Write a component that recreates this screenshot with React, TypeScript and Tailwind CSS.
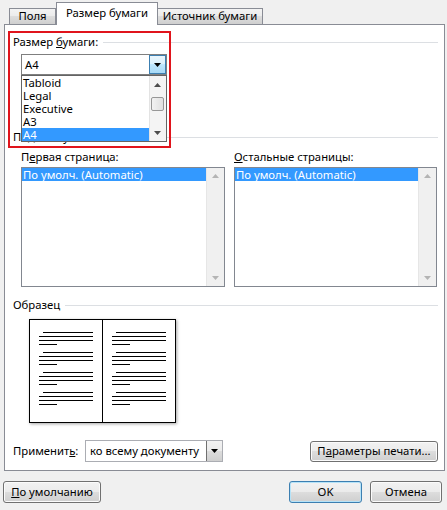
import React from "react"

const btn =
  "flex items-center justify-center rounded-[3px] border border-[#707070] bg-[linear-gradient(#f2f2f2,#ebebeb_49%,#dddddd_50%,#cfcfcf)] shadow-[inset_0_0_0_1px_#fbfbfb] text-black"

function Tri({ up = false, color = "#000" }: { up?: boolean; color?: string }) {
  return (
    <svg width="7" height="4" viewBox="0 0 7 4" className="block">
      <path d={up ? "M0 4 L3.5 0 L7 4 Z" : "M0 0 L7 0 L3.5 4 Z"} fill={color} />
    </svg>
  )
}

function Header({ children }: { children: React.ReactNode }) {
  return (
    <div className="flex h-[14px] items-center">
      <span className="pr-[5px] leading-[14px]">{children}</span>
      <div className="mr-[1px] h-px flex-1 bg-[#dcdfe3]" />
    </div>
  )
}

function ListBox() {
  return (
    <div className="flex h-[120px] border border-[#828790] bg-white">
      <div className="flex-1">
        <div className="h-[13px] bg-[#3399ff] pl-[1px] leading-[13px] text-white">
          По умолч. (Automatic)
        </div>
      </div>
      <div className="flex w-[18px] flex-col items-center justify-between bg-[#f0f0f0] py-[6px] shadow-[inset_1px_0_0_#e6e6e6]">
        <Tri up color="#b4b4b4" />
        <Tri color="#b4b4b4" />
      </div>
    </div>
  )
}

function Page({ first }: { first?: boolean }) {
  const groups = [0, 1, 2, 3]
  return (
    <div
      className={
        "flex h-full flex-1 flex-col gap-[7px] pt-[12px] pl-[9px] " +
        (first ? "border-r border-black" : "")
      }
    >
      {groups.map((g) => (
        <div key={g} className="flex flex-col gap-[3px]">
          <div className="ml-[4px] h-px w-[50px] bg-black" />
          <div className="h-px w-[54px] bg-black" />
          <div className="h-px w-[54px] bg-black" />
          <div className="h-px w-[18px] bg-black" />
        </div>
      ))}
    </div>
  )
}

export default function App() {
  const sizes = ["Tabloid", "Legal", "Executive", "A3", "A4"]
  return (
    <div className="h-[510px] w-[447px] overflow-hidden bg-[#f0f0f0] font-['Noto_Sans','Open_Sans',sans-serif] text-[11.3px] text-black">
      {/* tabs */}
      <div className="flex h-[24px] items-end pl-[9px]">
        <div className="flex h-[16px] w-[47px] items-center justify-center border-x border-t border-[#898c95] bg-[linear-gradient(#f3f3f3,#ebebeb_50%,#dddddd_50%,#cfcfcf)]">
          Поля
        </div>
        <div className="relative z-10 -mb-px flex h-[23px] w-[102px] items-center justify-center border-x border-t border-[#898c95] bg-white pb-[2px]">
          Размер бумаги
        </div>
        <div className="flex h-[16px] w-[105px] items-center justify-center border-r border-t border-[#898c95] bg-[linear-gradient(#f3f3f3,#ebebeb_50%,#dddddd_50%,#cfcfcf)]">
          Источник бумаги
        </div>
      </div>

      {/* panel */}
      <div className="relative ml-[4px] flex h-[447px] w-[441px] flex-col border border-[#898c95] bg-white pt-[10px] pr-[5px] pl-[8px]">
        <Header>
          Размер <span className="underline">б</span>умаги:
        </Header>
        <div className="mt-[5px] ml-[8px] flex h-[21px] w-[146px] items-center border border-[#7f7f7f] bg-white">
          <span className="flex-1 pl-[3px] leading-[19px]">A4</span>
          <div className="flex h-[19px] w-[17px] items-center justify-center border border-[#3c7fb1] bg-[linear-gradient(#eaf6fd,#d9f0fc_49%,#bee6fd_50%,#a7d9f5)]">
            <Tri />
          </div>
        </div>

        <div className="mt-[55px]">
          <Header>Подача бумаги</Header>
        </div>

        <div className="mt-[6px] ml-[8px] flex gap-[9px]">
          <div className="w-[204px]">
            <div className="h-[14px] leading-[14px]">
              П<span className="underline">е</span>рвая страница:
            </div>
            <div className="mt-[3px]">
              <ListBox />
            </div>
          </div>
          <div className="w-[203px]">
            <div className="h-[14px] leading-[14px]">
              <span className="underline">О</span>стальные страницы:
            </div>
            <div className="mt-[3px]">
              <ListBox />
            </div>
          </div>
        </div>

        <div className="mt-[11px]">
          <Header>Образец</Header>
        </div>

        <div className="mt-[7px] ml-[16px] flex h-[104px] w-[147px] border border-black bg-white shadow-[1px_1px_3px_rgba(0,0,0,0.35)]">
          <Page first />
          <Page />
        </div>

        <div className="mt-[17px] flex h-[22px] items-center">
          <span className="w-[72px] leading-[14px]">
            Применит<span className="underline">ь</span>:
          </span>
          <div className="flex h-[22px] w-[138px] items-center border border-[#abadb3] bg-white">
            <span className="flex-1 pl-[4px]">ко всему документу</span>
            <div className="flex h-[20px] w-[16px] items-center justify-center border-l border-[#707070] bg-[linear-gradient(#f2f2f2,#ebebeb_49%,#dddddd_50%,#cfcfcf)]">
              <Tri />
            </div>
          </div>
          <div className="flex-1" />
          <button className={btn + " mr-[1px] h-[21px] w-[128px]"}>
            П<span className="underline">а</span>раметры печати...
          </button>
        </div>

        {/* open dropdown list */}
        <div className="absolute top-[50px] left-[16px] z-20 flex h-[67px] w-[146px] border border-[#646464] bg-white">
          <div className="flex-1">
            {sizes.map((s) => (
              <div
                key={s}
                className={
                  "h-[13px] pl-[1px] leading-[13px] " +
                  (s === "A4" ? "bg-[#3399ff] text-white" : "")
                }
              >
                {s}
              </div>
            ))}
          </div>
          <div className="relative w-[17px] bg-[#f4f4f4] shadow-[inset_1px_0_0_#e3e3e3]">
            <div className="flex h-[17px] items-center justify-center">
              <Tri up color="#4d4d4d" />
            </div>
            <div className="mx-[2px] mt-[4px] h-[14px] rounded-[2px] border border-[#979797] bg-[linear-gradient(90deg,#f2f2f2,#e0e0e0)]" />
            <div className="absolute right-0 bottom-0 left-0 flex h-[17px] items-center justify-center">
              <Tri color="#4d4d4d" />
            </div>
          </div>
        </div>

        {/* highlight frame */}
        <div className="pointer-events-none absolute top-[6px] left-[3px] z-30 h-[117px] w-[163px] border-2 border-[#e0141c]" />
      </div>

      {/* dialog buttons */}
      <div className="mt-[10px] flex items-center pr-[5px] pl-[3px]">
        <button className={btn + " h-[22px] w-[98px]"}>
          <span className="underline">П</span>о умолчанию
        </button>
        <div className="flex-1" />
        <button className="flex h-[22px] w-[73px] items-center justify-center rounded-[3px] border border-[#3c7fb1] bg-[linear-gradient(#f2f2f2,#ebebeb_49%,#dddddd_50%,#cfcfcf)] shadow-[inset_0_0_0_1px_#b6e3f8]">
          OK
        </button>
        <button className={btn + " ml-[8px] h-[22px] w-[72px]"}>Отмена</button>
      </div>
    </div>
  )
}
